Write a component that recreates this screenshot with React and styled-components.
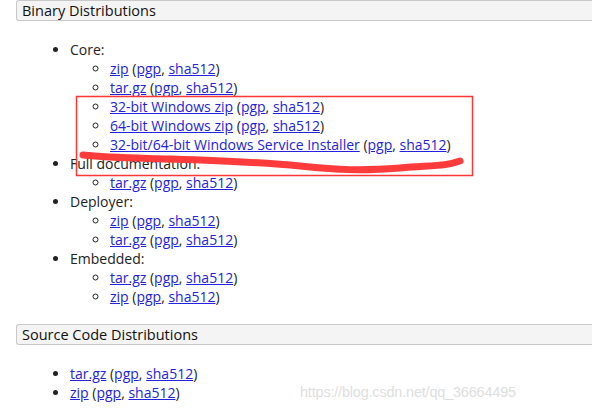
import React from 'react';
import styled, { createGlobalStyle } from 'styled-components';

const Global = createGlobalStyle`
  body {
    margin: 0;
    background: #fff;
    font-family: "Open Sans", "Noto Sans", sans-serif;
    color: #222;
  }
`;

const Page = styled.div`
  position: relative;
  width: 592px;
  height: 411px;
  overflow: hidden;
`;

const SectionHead = styled.div`
  margin-left: 16px;
  margin-top: ${props => props.top || 0}px;
  height: 19px;
  padding-left: 5px;
  background: #f4f4f4;
  border: 1px solid #c8c8c8;
  border-right: none;
  border-radius: 3px 0 0 3px;
  font-size: 14.5px;
  font-weight: 500;
  line-height: 19px;
  color: #111;
`;

const List = styled.ul`
  margin: 19px 0 0;
  padding-left: 70px;
  list-style: disc;
  font-size: 14px;
  line-height: 19px;
`;

const SubList = styled.ul`
  margin: 0;
  padding-left: 40px;
  list-style: circle;
`;

const Link = styled.a`
  color: #2323dd;
  text-decoration: underline;
`;

const Annotation = styled.svg`
  position: absolute;
  left: 0;
  top: 0;
  pointer-events: none;
`;

const Watermark = styled.div`
  position: absolute;
  left: 300px;
  top: 384px;
  font-family: "Liberation Sans", Arial, sans-serif;
  font-size: 14.5px;
  color: #dedede;
  letter-spacing: -0.2px;
`;

const Download = ({ name }) => (
  <li>
    <Link href="#">{name}</Link> (<Link href="#">pgp</Link>, <Link href="#">sha512</Link>)
  </li>
);

const groups = [
  { title: 'Core:', files: ['zip', 'tar.gz', '32-bit Windows zip', '64-bit Windows zip', '32-bit/64-bit Windows Service Installer'] },
  { title: 'Full documentation:', files: ['tar.gz'] },
  { title: 'Deployer:', files: ['zip', 'tar.gz'] },
  { title: 'Embedded:', files: ['tar.gz', 'zip'] },
];

export default function App() {
  return (
    <Page>
      <Global />
      <SectionHead>Binary Distributions</SectionHead>
      <List>
        {groups.map(g => (
          <li key={g.title}>
            {g.title}
            <SubList>
              {g.files.map(f => <Download key={f} name={f} />)}
            </SubList>
          </li>
        ))}
      </List>
      <SectionHead top={18}>Source Code Distributions</SectionHead>
      <List>
        <Download name="tar.gz" />
        <Download name="zip" />
      </List>
      <Annotation width="592" height="411">
        <rect x="76.5" y="96.5" width="396" height="79" fill="none" stroke="#ff3636" strokeWidth="1.5" />
        <path
          d="M83 155 C 110 158, 140 158, 170 159 S 260 162, 300 166 S 360 171, 400 168 S 445 166, 460 161"
          fill="none"
          stroke="#ff3b3b"
          strokeWidth="7"
          strokeLinecap="round"
        />
      </Annotation>
      <Watermark>https://blog.csdn.net/qq_36664495</Watermark>
    </Page>
  );
}
